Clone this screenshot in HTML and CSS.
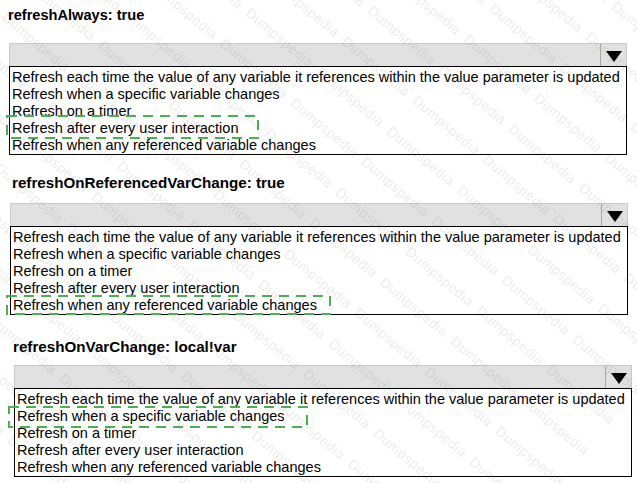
FILE: index.html
```html
<!DOCTYPE html>
<html lang="en">
<head>
<meta charset="utf-8">
<title>Refresh options</title>
<link rel="stylesheet" href="styles.css">
</head>
<body>
<main class="page">
  <section class="field field-one">
    <h2 class="label">refreshAlways: true</h2>
    <div class="select">
      <div class="select-bar"><span class="select-btn"><svg class="caret" width="16" height="11" viewBox="0 0 16 11"><polygon points="0,0 16,0 8,11" fill="#000"/></svg></span></div>
      <ul class="options">
        <li>Refresh each time the value of any variable it references within the value parameter is updated</li>
        <li>Refresh when a specific variable changes</li>
        <li>Refresh on a timer</li>
        <li>Refresh after every user interaction</li>
        <li>Refresh when any referenced variable changes</li>
      </ul>
      <svg class="pick pick-one" width="253" height="24" viewBox="0 0 253 24"><rect x="1" y="1" width="251" height="22" fill="none" stroke="#4caf50" stroke-width="2" stroke-dasharray="10 7"/></svg>
    </div>
  </section>

  <section class="field field-two">
    <h2 class="label">refreshOnReferencedVarChange: true</h2>
    <div class="select">
      <div class="select-bar"><span class="select-btn"><svg class="caret" width="16" height="11" viewBox="0 0 16 11"><polygon points="0,0 16,0 8,11" fill="#000"/></svg></span></div>
      <ul class="options">
        <li>Refresh each time the value of any variable it references within the value parameter is updated</li>
        <li>Refresh when a specific variable changes</li>
        <li>Refresh on a timer</li>
        <li>Refresh after every user interaction</li>
        <li>Refresh when any referenced variable changes</li>
      </ul>
      <svg class="pick pick-two" width="325" height="20" viewBox="0 0 325 20"><rect x="1" y="1" width="323" height="18" fill="none" stroke="#4caf50" stroke-width="2" stroke-dasharray="10 7"/></svg>
    </div>
  </section>

  <section class="field field-three">
    <h2 class="label">refreshOnVarChange: local!var</h2>
    <div class="select">
      <div class="select-bar"><span class="select-btn"><svg class="caret" width="16" height="11" viewBox="0 0 16 11"><polygon points="0,0 16,0 8,11" fill="#000"/></svg></span></div>
      <ul class="options">
        <li>Refresh each time the value of any variable it references within the value parameter is updated</li>
        <li>Refresh when a specific variable changes</li>
        <li>Refresh on a timer</li>
        <li>Refresh after every user interaction</li>
        <li>Refresh when any referenced variable changes</li>
      </ul>
      <svg class="pick pick-three" width="300" height="22" viewBox="0 0 300 22"><rect x="1" y="1" width="298" height="20" fill="none" stroke="#4caf50" stroke-width="2" stroke-dasharray="10 7"/></svg>
    </div>
  </section>

  <div class="watermark" aria-hidden="true">
    <div class="watermark-sheet">
      <p>Dumpspedia Dumpspedia Dumpspedia Dumpspedia Dumpspedia Dumpspedia Dumpspedia Dumpspedia Dumpspedia Dumpspedia Dumpspedia Dumpspedia</p>
      <p>Dumpspedia Dumpspedia Dumpspedia Dumpspedia Dumpspedia Dumpspedia Dumpspedia Dumpspedia Dumpspedia Dumpspedia Dumpspedia Dumpspedia</p>
      <p>Dumpspedia Dumpspedia Dumpspedia Dumpspedia Dumpspedia Dumpspedia Dumpspedia Dumpspedia Dumpspedia Dumpspedia Dumpspedia Dumpspedia</p>
      <p>Dumpspedia Dumpspedia Dumpspedia Dumpspedia Dumpspedia Dumpspedia Dumpspedia Dumpspedia Dumpspedia Dumpspedia Dumpspedia Dumpspedia</p>
      <p>Dumpspedia Dumpspedia Dumpspedia Dumpspedia Dumpspedia Dumpspedia Dumpspedia Dumpspedia Dumpspedia Dumpspedia Dumpspedia Dumpspedia</p>
      <p>Dumpspedia Dumpspedia Dumpspedia Dumpspedia Dumpspedia Dumpspedia Dumpspedia Dumpspedia Dumpspedia Dumpspedia Dumpspedia Dumpspedia</p>
      <p>Dumpspedia Dumpspedia Dumpspedia Dumpspedia Dumpspedia Dumpspedia Dumpspedia Dumpspedia Dumpspedia Dumpspedia Dumpspedia Dumpspedia</p>
      <p>Dumpspedia Dumpspedia Dumpspedia Dumpspedia Dumpspedia Dumpspedia Dumpspedia Dumpspedia Dumpspedia Dumpspedia Dumpspedia Dumpspedia</p>
      <p>Dumpspedia Dumpspedia Dumpspedia Dumpspedia Dumpspedia Dumpspedia Dumpspedia Dumpspedia Dumpspedia Dumpspedia Dumpspedia Dumpspedia</p>
      <p>Dumpspedia Dumpspedia Dumpspedia Dumpspedia Dumpspedia Dumpspedia Dumpspedia Dumpspedia Dumpspedia Dumpspedia Dumpspedia Dumpspedia</p>
      <p>Dumpspedia Dumpspedia Dumpspedia Dumpspedia Dumpspedia Dumpspedia Dumpspedia Dumpspedia Dumpspedia Dumpspedia Dumpspedia Dumpspedia</p>
      <p>Dumpspedia Dumpspedia Dumpspedia Dumpspedia Dumpspedia Dumpspedia Dumpspedia Dumpspedia Dumpspedia Dumpspedia Dumpspedia Dumpspedia</p>
      <p>Dumpspedia Dumpspedia Dumpspedia Dumpspedia Dumpspedia Dumpspedia Dumpspedia Dumpspedia Dumpspedia Dumpspedia Dumpspedia Dumpspedia</p>
      <p>Dumpspedia Dumpspedia Dumpspedia Dumpspedia Dumpspedia Dumpspedia Dumpspedia Dumpspedia Dumpspedia Dumpspedia Dumpspedia Dumpspedia</p>
      <p>Dumpspedia Dumpspedia Dumpspedia Dumpspedia Dumpspedia Dumpspedia Dumpspedia Dumpspedia Dumpspedia Dumpspedia Dumpspedia Dumpspedia</p>
      <p>Dumpspedia Dumpspedia Dumpspedia Dumpspedia Dumpspedia Dumpspedia Dumpspedia Dumpspedia Dumpspedia Dumpspedia Dumpspedia Dumpspedia</p>
      <p>Dumpspedia Dumpspedia Dumpspedia Dumpspedia Dumpspedia Dumpspedia Dumpspedia Dumpspedia Dumpspedia Dumpspedia Dumpspedia Dumpspedia</p>
      <p>Dumpspedia Dumpspedia Dumpspedia Dumpspedia Dumpspedia Dumpspedia Dumpspedia Dumpspedia Dumpspedia Dumpspedia Dumpspedia Dumpspedia</p>
      <p>Dumpspedia Dumpspedia Dumpspedia Dumpspedia Dumpspedia Dumpspedia Dumpspedia Dumpspedia Dumpspedia Dumpspedia Dumpspedia Dumpspedia</p>
      <p>Dumpspedia Dumpspedia Dumpspedia Dumpspedia Dumpspedia Dumpspedia Dumpspedia Dumpspedia Dumpspedia Dumpspedia Dumpspedia Dumpspedia</p>
      <p>Dumpspedia Dumpspedia Dumpspedia Dumpspedia Dumpspedia Dumpspedia Dumpspedia Dumpspedia Dumpspedia Dumpspedia Dumpspedia Dumpspedia</p>
      <p>Dumpspedia Dumpspedia Dumpspedia Dumpspedia Dumpspedia Dumpspedia Dumpspedia Dumpspedia Dumpspedia Dumpspedia Dumpspedia Dumpspedia</p>
      <p>Dumpspedia Dumpspedia Dumpspedia Dumpspedia Dumpspedia Dumpspedia Dumpspedia Dumpspedia Dumpspedia Dumpspedia Dumpspedia Dumpspedia</p>
      <p>Dumpspedia Dumpspedia Dumpspedia Dumpspedia Dumpspedia Dumpspedia Dumpspedia Dumpspedia Dumpspedia Dumpspedia Dumpspedia Dumpspedia</p>
      <p>Dumpspedia Dumpspedia Dumpspedia Dumpspedia Dumpspedia Dumpspedia Dumpspedia Dumpspedia Dumpspedia Dumpspedia Dumpspedia Dumpspedia</p>
      <p>Dumpspedia Dumpspedia Dumpspedia Dumpspedia Dumpspedia Dumpspedia Dumpspedia Dumpspedia Dumpspedia Dumpspedia Dumpspedia Dumpspedia</p>
      <p>Dumpspedia Dumpspedia Dumpspedia Dumpspedia Dumpspedia Dumpspedia Dumpspedia Dumpspedia Dumpspedia Dumpspedia Dumpspedia Dumpspedia</p>
      <p>Dumpspedia Dumpspedia Dumpspedia Dumpspedia Dumpspedia Dumpspedia Dumpspedia Dumpspedia Dumpspedia Dumpspedia Dumpspedia Dumpspedia</p>
    </div>
  </div>
</main>
</body>
</html>
```

FILE: styles.css
```css
* { box-sizing: border-box; }

html, body {
  margin: 0;
  padding: 0;
  background: #fff;
}

.page {
  position: relative;
  width: 637px;
  height: 483px;
  overflow: hidden;
  font-family: "Liberation Sans", Arial, sans-serif;
  color: #000;
}

.field {
  display: flex;
  flex-direction: column;
  width: 618px;
}

.field-one   { margin-left: 9px;  padding-top: 7px; }
.field-two   { margin-left: 10px; margin-top: 19px; }
.field-three { margin-left: 14px; margin-top: 23px; }

.label {
  margin: 0;
  font-size: 14.6px;
  line-height: 17px;
  font-weight: bold;
}

.field-one .label   { margin-bottom: 19px; margin-left: -1px; }
.field-two .label   { margin-bottom: 12px; padding-left: 2px; font-size: 15.2px; }
.field-three .label { margin-bottom: 10px; margin-left: -1px; font-size: 15.2px; }

.select {
  position: relative;
}

.select-bar {
  display: flex;
  justify-content: flex-end;
  height: 23px;
  background: #e1e1e1;
  border: 1px solid #c9c9c9;
  border-bottom: 0;
}

.select-btn {
  display: flex;
  align-items: center;
  justify-content: center;
  width: 26px;
  padding-top: 3px;
  border-left: 1px solid #a3aba3;
}

.caret { display: block; }

.options {
  list-style: none;
  margin: 0;
  padding: 2px 0 0 2px;
  border: 1px solid #000;
  background: #fff;
  font-size: 14.5px;
  line-height: 17px;
}

.options li {
  white-space: nowrap;
}

/* dashed highlight drawn over the chosen option */
.pick {
  position: absolute;
  display: block;
}

.pick-one   { left: -3px; top: 72px; }
.pick-two   { left: -4px; top: 92px; }
.pick-three { left: -6px; top: 41px; }

.watermark {
  position: absolute;
  inset: 0;
  overflow: hidden;
  pointer-events: none;
}

.watermark-sheet {
  position: absolute;
  left: -300px;
  top: -500px;
  width: 1400px;
  transform: rotate(40deg);
  transform-origin: 50% 50%;
}

.watermark-sheet p {
  margin: 0;
  white-space: nowrap;
  font-family: "Liberation Sans", Arial, sans-serif;
  font-size: 14px;
  line-height: 40px;
  letter-spacing: 0.5px;
  word-spacing: 4px;
  color: rgba(110, 110, 110, 0.15);
}
```
